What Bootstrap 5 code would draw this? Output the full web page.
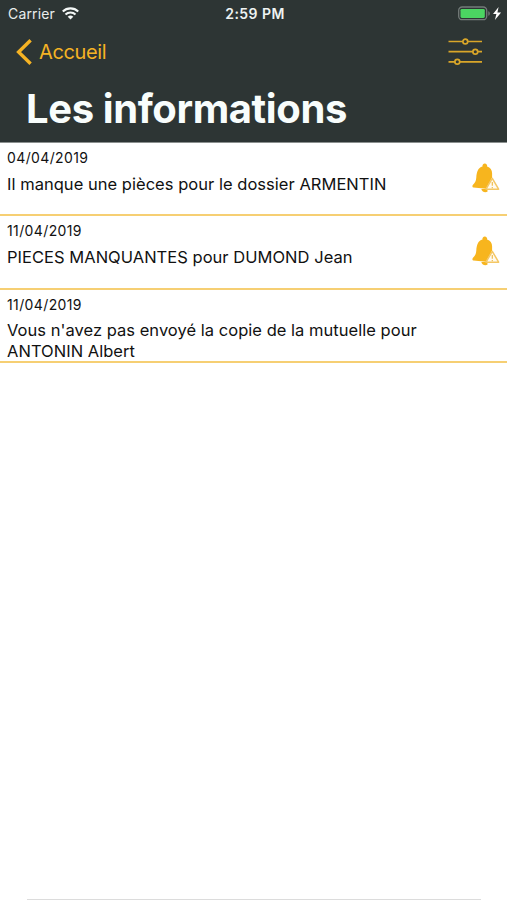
<!DOCTYPE html>
<html lang="fr">
<head>
<meta charset="utf-8">
<meta name="viewport" content="width=device-width, initial-scale=1">
<title>Les informations</title>
<link href="https://cdn.jsdelivr.net/npm/bootstrap@5.3.0/dist/css/bootstrap.min.css" rel="stylesheet">
<style>
body{font-family:Inter,"Liberation Sans",sans-serif;color:#111;background:#fff;height:900px;overflow:hidden}
svg{display:block}
.top{background:#2d3534;height:143px;flex:none;border-bottom:1px solid #8b908f}
.status{height:27px;padding:0 5px 0 8px;color:#e9eded;font-size:14px}
.carrier{letter-spacing:.15px}
.wifi{margin-left:7px}
.clock{font-weight:600;font-size:14px;letter-spacing:.45px;color:#eef3f2}
.side{flex:1 1 0}
.tools{height:49px;padding:1px 25px 0 15px}
.back{color:#f5b324;font-size:20px;letter-spacing:-.38px;text-decoration:none;line-height:24px}
.label{padding-left:6px}
.title{font-size:40px;line-height:48px;font-weight:700;color:#f8fdfc;letter-spacing:-.4px;margin:0;padding:9px 0 0 26px}
.list-group-flush>.info,.list-group-flush>.info:last-child{height:73.4px;padding:6px 7px 0;border:0;border-bottom:2px solid #f6cf73;background:#fff;color:#111}
.date{font-size:14px;line-height:17px;letter-spacing:.38px}
.msg{font-size:16.5px;line-height:20.5px;letter-spacing:.03px;margin-top:7.5px;width:430px}
.bell{margin-top:14px}
.endline{height:1px;margin:0 26px 0 27px;background:#dcdcdc}
</style>
</head>
<body class="d-flex flex-column">
<header class="top">
  <div class="status d-flex align-items-center">
    <div class="side d-flex align-items-center"><span class="carrier">Carrier</span>
      <svg class="wifi" width="17" height="13" viewBox="0 0 17 13" fill="none" stroke="#f4f8f7" stroke-width="2.1"><path d="M.8 4.500a11 11 0 0 1 15.400 0M3.500 7.500a7.200 7.200 0 0 1 10 0"/><path d="M8.500 12.600 5.700 9.800a4 4 0 0 1 5.600 0z" fill="#f4f8f7" stroke="none"/></svg>
    </div>
    <span class="clock">2:59 PM</span>
    <div class="side d-flex justify-content-end align-items-center">
      <svg width="44" height="15" viewBox="0 0 44 15"><rect x=".7" y="1" width="28" height="12.7" rx="3.5" fill="none" stroke="#737b79" stroke-width="1.3"/><rect x="2.5" y="2.9" width="24.3" height="9" rx="1.4" fill="#4bd562"/><path d="M30.3 5.2c2 .5 2 4 0 4.5z" fill="#737b79"/><path d="M40.6 1 35 8h3.400l-1.500 6 6.200-7.500h-3.700z" fill="#fff"/></svg>
    </div>
  </div>
  <nav class="tools d-flex align-items-center justify-content-between">
    <a href="#" class="back d-flex align-items-center">
      <svg width="18" height="28" viewBox="0 0 18 28" fill="none" stroke="#f5b324" stroke-width="3.4"><path d="M15.600 2.200 3.600 14l12 11.800"/></svg>
      <span class="label">Accueil</span>
    </a>
    <svg width="34" height="28" viewBox="0 0 34 28" fill="#2d3534" stroke="#d9a629" stroke-width="1.7"><path d="M.5 3.500h34M.5 13.700h34M.5 23.800h34"/><circle cx="17.300" cy="3.500" r="2.400"/><circle cx="27.300" cy="13.700" r="2.400"/><circle cx="9.300" cy="23.800" r="2.400"/></svg>
  </nav>
  <h1 class="title">Les informations</h1>
</header>
<svg class="d-none"><defs><g id="bell"><path d="M12.800.5a2.400 2.400 0 0 1 2.300 3c3.200 1 5 3.600 5 7v4L14 25.800 1.500 24.600C.2 24.400.1 22.800 1 21.800c2-2 3-3.600 3.300-7.300.3-5.300 1.600-9.800 6.200-11A2.400 2.400 0 0 1 12.800.5z" fill="#f7b51e"/><path d="M9.300 26h5.500l1 2.200c-2 2-5.500 1.200-6.500-2.200z" fill="#f7b51e"/><path d="M20.300 15.300 14 26.200h12.600z" fill="#fffaf0" stroke="#f4c765" stroke-width="1.500" stroke-linejoin="round"/><path d="M20.300 19v3.800M20.300 24v1.200" stroke="#f0bd4c" stroke-width="1.200"/></g></defs></svg>
<main class="list-group list-group-flush">
  <article class="list-group-item info d-flex justify-content-between">
    <div><div class="date">04/04/2019</div><div class="msg">Il manque une pièces pour le dossier ARMENTIN</div></div>
    <svg class="bell" width="28" height="32" viewBox="0 0 28 32"><use href="#bell"/></svg>
  </article>
  <article class="list-group-item info d-flex justify-content-between">
    <div><div class="date">11/04/2019</div><div class="msg">PIECES MANQUANTES pour DUMOND Jean</div></div>
    <svg class="bell" width="28" height="32" viewBox="0 0 28 32"><use href="#bell"/></svg>
  </article>
  <article class="list-group-item info">
    <div class="date">11/04/2019</div><div class="msg">Vous n'avez pas envoyé la copie de la mutuelle pour ANTONIN Albert</div>
  </article>
</main>
<div class="endline mt-auto"></div>
</body>
</html>
